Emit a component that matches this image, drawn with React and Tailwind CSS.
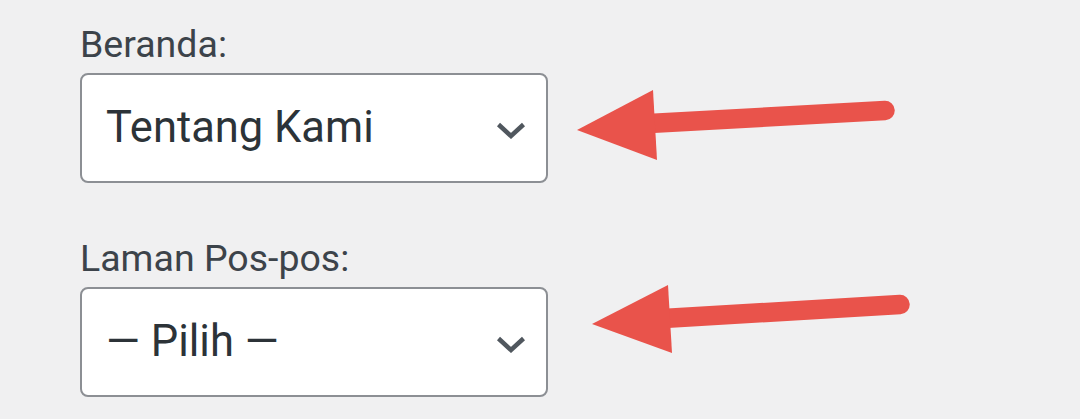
import React from 'react'

const FIELDS = [
  { label: 'Beranda:', value: 'Tentang Kami' },
  { label: 'Laman Pos-pos:', value: '— Pilih —' },
]

function Chevron() {
  return (
    <svg width="30" height="17" viewBox="0 0 30 17" className="shrink-0 mt-[5px]">
      <polyline
        points="2.5,2.5 15,14 27.5,2.5"
        fill="none"
        stroke="#50575e"
        strokeWidth="4.5"
        strokeLinecap="butt"
        strokeLinejoin="miter"
      />
    </svg>
  )
}

function SelectField({ label, value, className = '' }) {
  return (
    <div className={`flex flex-col ${className}`}>
      <label className="text-[37.5px] leading-[37px] text-[#3c434a] mb-[10px]">{label}</label>
      <div className="w-[468px] h-[110px] flex items-center justify-between pl-[24px] pr-[20px] bg-white border-2 border-[#8c8f94] rounded-[8px]">
        <span className="text-[43.5px] leading-[44px] text-[#2c3338]">{value}</span>
        <Chevron />
      </div>
    </div>
  )
}

export default function App() {
  return (
    <div
      className="relative w-[1080px] h-[419px] overflow-hidden bg-[#f0f0f1] pl-[80px] pt-[26px]"
      style={{ fontFamily: 'Roboto, "Noto Sans", sans-serif' }}
    >
      <SelectField label={FIELDS[0].label} value={FIELDS[0].value} />
      <SelectField label={FIELDS[1].label} value={FIELDS[1].value} className="mt-[57px]" />

      {/* Annotation arrows drawn over the page */}
      <svg className="absolute inset-0 pointer-events-none" width="1080" height="419" viewBox="0 0 1080 419">
        <g fill="#e9534b" stroke="#e9534b">
          <line x1="640" y1="124" x2="885" y2="110.5" strokeWidth="19.5" strokeLinecap="round" />
          <polygon points="577,130 653,90 657,160" stroke="none" />
          <line x1="655" y1="319" x2="900" y2="304.5" strokeWidth="19.5" strokeLinecap="round" />
          <polygon points="592,324 668,285 672,353" stroke="none" />
        </g>
      </svg>
    </div>
  )
}
